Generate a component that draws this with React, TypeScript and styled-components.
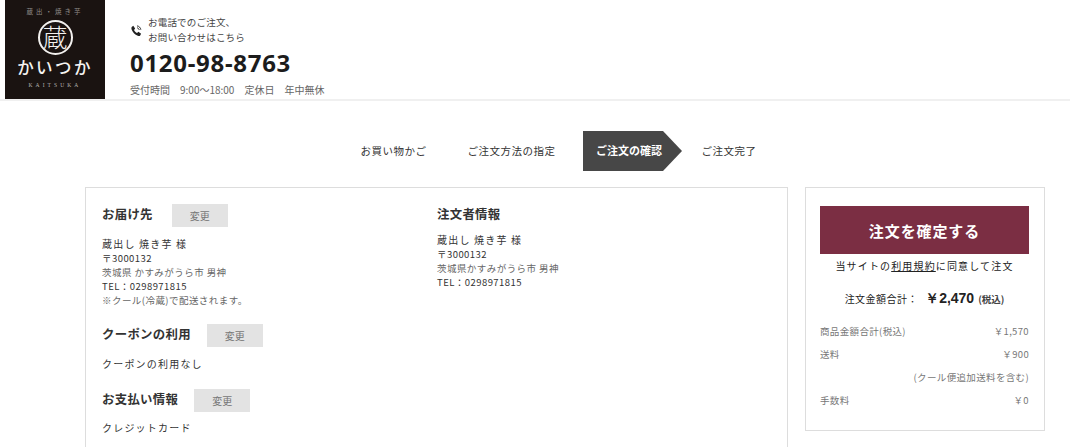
import * as React from 'react';
import styled, { createGlobalStyle } from 'styled-components';

const GlobalStyle = createGlobalStyle`
html, body {
  margin: 0;
  padding: 0;
  background: #fff;
  overflow: hidden;
}
body {
  font-family: "Noto Sans CJK JP", "Noto Sans", sans-serif;
  color: #333;
}
`;

const Page = styled.div`
  width: 1070px;
  height: 447px;
  overflow: hidden;
`;

const Header = styled.header`
  height: 99px;
  display: flex;
  align-items: flex-start;
  padding-left: 5px;
  border-bottom: 2px solid #f0f0f0;
`;

const Logo = styled.div`
  width: 100px;
  height: 99px;
  background: #1a1311;
  color: #eee;
  display: flex;
  flex-direction: column;
  align-items: center;
  overflow: hidden;
`;

const LogoTop = styled.div`
  font-size: 6.5px;
  line-height: 9px;
  letter-spacing: 3px;
  margin-top: 7px;
  color: #8f8b89;
  white-space: nowrap;
`;

const LogoMark = styled.div`
  width: 31px;
  height: 31px;
  box-sizing: content-box;
  margin-top: 4px;
  border: 2px solid #f2f0ee;
  border-radius: 50%;
  display: flex;
  align-items: flex-start;
  justify-content: center;
  font-size: 25px;
  font-weight: 300;
  line-height: 29px;
  color: #f2f0ee;
`;

const LogoName = styled.div`
  font-size: 16.5px;
  line-height: 22px;
  letter-spacing: 2.4px;
  margin-top: 1px;
  font-weight: 500;
  color: #f5f3f1;
  white-space: nowrap;
`;

const LogoLatin = styled.div`
  font-family: "Liberation Serif", serif;
  font-size: 5.5px;
  line-height: 6px;
  letter-spacing: 3.1px;
  margin-top: 4px;
  color: #b9b5b3;
  white-space: nowrap;
`;

const Contact = styled.div`
  margin-left: 25px;
  padding-top: 15px;
  display: flex;
  flex-direction: column;
`;

const PhoneLead = styled.div`
  display: flex;
  align-items: center;
  gap: 5px;
  font-size: 9.5px;
  line-height: 15px;
  color: #444;
  letter-spacing: 0.2px;
`;

const PhoneNumber = styled.div`
  font-family: "Noto Sans", sans-serif;
  font-size: 24px;
  line-height: 30px;
  font-weight: 700;
  color: #1c1c1c;
  letter-spacing: 0.7px;
  margin-top: 3px;
`;

const Hours = styled.div`
  display: flex;
  gap: 10px;
  font-size: 10px;
  line-height: 13px;
  color: #666;
  margin-top: 5px;
`;

const Steps = styled.nav`
  display: flex;
  justify-content: flex-start;
  margin: 30px 0 0 347px;
  height: 40px;
  align-items: center;
`;

const Step = styled.div<{ $width: number }>`
  width: ${props => props.$width}px;
  text-align: center;
  font-size: 10.5px;
  line-height: 38px;
  letter-spacing: 0.5px;
  color: #333;
  white-space: nowrap;
`;

const ActiveStep = styled.div`
  width: 99px;
  height: 40px;
  background: #474747;
  clip-path: polygon(0 0, 80px 0, 100% 50%, 80px 100%, 0 100%);
  color: #fff;
  font-weight: 700;
  font-size: 11px;
  line-height: 38px;
  padding-left: 13px;
  box-sizing: border-box;
  white-space: nowrap;
`;

const Main = styled.main`
  display: flex;
  align-items: flex-start;
  gap: 17px;
  margin: 16px 0 0 85px;
`;

const DetailPanel = styled.section`
  width: 703px;
  height: 300px;
  box-sizing: border-box;
  border: 1px solid #ddd;
  padding: 16px 16px 0;
  display: grid;
  grid-template-columns: 335px 1fr;
  align-content: start;
`;

const Column = styled.div`
  display: flex;
  flex-direction: column;
`;

const HeadingRow = styled.div<{ $gap: number }>`
  display: flex;
  align-items: center;
  gap: ${props => props.$gap}px;
  height: 23px;
`;

const Heading = styled.h3`
  margin: 0 0 3px;
  font-size: 12.4px;
  line-height: 18px;
  font-weight: 700;
  color: #333;
  letter-spacing: 0.3px;
`;

const ChangeButton = styled.button`
  width: 56px;
  height: 23px;
  border: none;
  padding: 0;
  background: #e3e3e3;
  color: #777;
  font: inherit;
  font-size: 10px;
`;

const InfoBlock = styled.div<{ $top: number; $bottom?: number }>`
  margin-top: ${props => props.$top}px;
  margin-bottom: ${props => props.$bottom ?? 17}px;
`;

const InfoLine = styled.div<{ $tone?: string; $wide?: boolean }>`
  font-size: ${props => (props.$wide ? 10 : 9.5)}px;
  line-height: 14px;
  color: ${props => props.$tone || '#333'};
  letter-spacing: ${props => (props.$wide ? 1.2 : 0.45)}px;
  white-space: nowrap;
`;

const OrderPanel = styled.aside`
  width: 240px;
  height: 244px;
  box-sizing: border-box;
  border: 1px solid #ddd;
  padding: 18px 15px 0 14px;
`;

const ConfirmButton = styled.button`
  display: block;
  width: 100%;
  height: 48px;
  border: none;
  background: #7b2e43;
  color: #fff;
  font: inherit;
  font-size: 15px;
  font-weight: 700;
  letter-spacing: 0.9px;
`;

const Terms = styled.p`
  margin: 4px 0 0;
  text-align: center;
  font-size: 10px;
  line-height: 16px;
  letter-spacing: 1.15px;
  color: #222;

  a {
    color: inherit;
    text-decoration: underline;
  }
`;

const Total = styled.div`
  display: flex;
  align-items: baseline;
  justify-content: center;
  margin-top: 12px;
  font-size: 10px;
  line-height: 24px;
  letter-spacing: 0.5px;
  color: #222;
`;

const TotalPrice = styled.strong`
  font-family: "Liberation Sans", sans-serif;
  font-size: 14px;
  margin-left: 7px;
  letter-spacing: 0;
`;

const TaxNote = styled.span`
  font-size: 9.5px;
  font-weight: 700;
  margin-left: 4px;
  letter-spacing: 0;
  color: #444;
`;

const PriceList = styled.dl`
  margin: 8px 0 0;
  display: flex;
  flex-direction: column;
`;

const PriceRow = styled.div`
  display: flex;
  justify-content: space-between;
  height: 23px;
  align-items: center;
  font-size: 9.5px;
  color: #777;
  letter-spacing: 0.35px;

  dt, dd {
    margin: 0;
  }
`;

const App: React.FC = () => {
  return <Page>
    <GlobalStyle />
    <Header>
      <Logo>
        <LogoTop>蔵出・焼き芋</LogoTop>
        <LogoMark>蔵</LogoMark>
        <LogoName>かいつか</LogoName>
        <LogoLatin>KAITSUKA</LogoLatin>
      </Logo>
      <Contact>
        <PhoneLead>
          <svg width="13" height="13" viewBox="0 0 24 24" fill="#222">
            <path d="M6 3 9.500 8.500 7.500 11c1 2.500 3 4.500 5.500 5.500l2.500-2 5 3.500-2 3.500c-1 .7-2.500.8-4 .2C9 19.500 4.500 15 2.800 9.500c-.5-1.500-.3-3 .4-4z" />
            <path d="M13 3.500c3.500.3 6.700 3.500 7 7M13 7c1.800.3 3.700 2 4 4" fill="none" stroke="#222" strokeWidth="1.800" />
          </svg>
          <div>お電話でのご注文、<br />お問い合わせはこちら</div>
        </PhoneLead>
        <PhoneNumber>0120-98-8763</PhoneNumber>
        <Hours>
          <span>受付時間</span>
          <span>9:00〜18:00</span>
          <span>定休日</span>
          <span>年中無休</span>
        </Hours>
      </Contact>
    </Header>

    <Steps>
      <Step $width={93}>お買い物かご</Step>
      <Step $width={143}>ご注文方法の指定</Step>
      <ActiveStep>ご注文の確認</ActiveStep>
      <Step $width={94}>ご注文完了</Step>
    </Steps>

    <Main>
      <DetailPanel>
        <Column>
          <HeadingRow $gap={19}>
            <Heading>お届け先</Heading>
            <ChangeButton>変更</ChangeButton>
          </HeadingRow>
          <InfoBlock $top={10}>
            <InfoLine $wide>蔵出し 焼き芋 様</InfoLine>
            <InfoLine>〒3000132</InfoLine>
            <InfoLine $tone="#666">茨城県 かすみがうら市 男神</InfoLine>
            <InfoLine>TEL：0298971815</InfoLine>
            <InfoLine $tone="#666">※クール(冷蔵)で配送されます。</InfoLine>
          </InfoBlock>
          <HeadingRow $gap={16}>
            <Heading>クーポンの利用</Heading>
            <ChangeButton>変更</ChangeButton>
          </HeadingRow>
          <InfoBlock $top={10} $bottom={18}>
            <InfoLine $wide>クーポンの利用なし</InfoLine>
          </InfoBlock>
          <HeadingRow $gap={16}>
            <Heading>お支払い情報</Heading>
            <ChangeButton>変更</ChangeButton>
          </HeadingRow>
          <InfoBlock $top={9} $bottom={0}>
            <InfoLine $wide>クレジットカード</InfoLine>
          </InfoBlock>
        </Column>
        <Column>
          <HeadingRow $gap={0}>
            <Heading>注文者情報</Heading>
          </HeadingRow>
          <InfoBlock $top={6}>
            <InfoLine $wide>蔵出し 焼き芋 様</InfoLine>
            <InfoLine>〒3000132</InfoLine>
            <InfoLine $tone="#666">茨城県かすみがうら市 男神</InfoLine>
            <InfoLine>TEL：0298971815</InfoLine>
          </InfoBlock>
        </Column>
      </DetailPanel>

      <OrderPanel>
        <ConfirmButton>注文を確定する</ConfirmButton>
        <Terms>当サイトの<a href="#terms">利用規約</a>に同意して注文</Terms>
        <Total>
          注文金額合計：
          <TotalPrice>￥2,470</TotalPrice>
          <TaxNote>(税込)</TaxNote>
        </Total>
        <PriceList>
          <PriceRow><dt>商品金額合計(税込)</dt><dd>￥1,570</dd></PriceRow>
          <PriceRow><dt>送料</dt><dd>￥900</dd></PriceRow>
          <PriceRow><dt></dt><dd>(クール便追加送料を含む)</dd></PriceRow>
          <PriceRow><dt>手数料</dt><dd>￥0</dd></PriceRow>
        </PriceList>
      </OrderPanel>
    </Main>
  </Page>;
};

export default App;
